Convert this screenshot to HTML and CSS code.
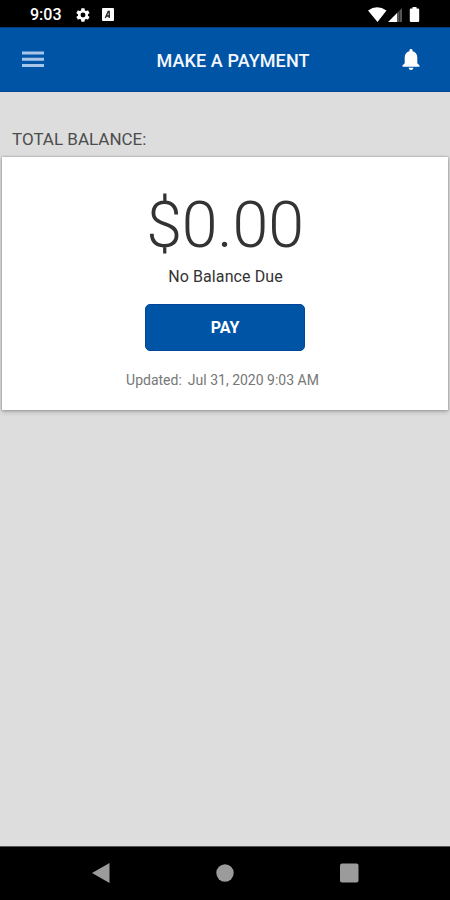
FILE: index.html
```html
<!DOCTYPE html>
<html lang="en">
<head>
<meta charset="utf-8">
<title>Make a Payment</title>
<link rel="stylesheet" href="styles.css">
</head>
<body>
<div class="screen">
  <div class="status">
    <span class="clock">9:03</span>
    <svg class="gear" width="16" height="16" viewBox="0 0 24 24"><path fill="#fff" fill-rule="evenodd" d="M19.4 13a7.500 7.500 0 0 0 0-2l2.100-1.600a.5.5 0 0 0 .1-.7l-2-3.400a.5.5 0 0 0-.6-.2l-2.500 1a7.300 7.300 0 0 0-1.700-1l-.4-2.600a.5.5 0 0 0-.5-.5h-4a.5.5 0 0 0-.5.5L9 5.100a7.300 7.300 0 0 0-1.700 1l-2.500-1a.5.5 0 0 0-.6.2l-2 3.400a.5.5 0 0 0 .1.7L4.500 11a7.500 7.500 0 0 0 0 2l-2.200 1.600a.5.5 0 0 0-.1.700l2 3.400a.5.5 0 0 0 .6.2l2.500-1a7.300 7.300 0 0 0 1.700 1l.4 2.600a.5.5 0 0 0 .5.5h4a.5.5 0 0 0 .5-.5l.4-2.600a7.300 7.300 0 0 0 1.700-1l2.500 1a.5.5 0 0 0 .6-.2l2-3.400a.5.5 0 0 0-.1-.7zM12 15.700a3.700 3.700 0 1 1 0-7.400 3.700 3.700 0 0 1 0 7.400z"/></svg>
    <svg class="keyboard" width="12" height="13" viewBox="0 0 12 13"><rect width="12" height="13" rx="1" fill="#fff"/><path d="M3.300 10 6.200 3.500h1V10M3.800 8H8" fill="none" stroke="#222" stroke-width="1.300"/></svg>
    <svg class="signals" width="54" height="18" viewBox="0 0 54 18"><path fill="#fff" d="M0 4.500Q9-1.800 18.500 4.500L9.500 16zM20 16 29 7v9z"/><path fill="#555" d="M29 7l5-5v14h-5z"/><path d="M31.500 5v11" stroke="#333" stroke-width="1"/><path fill="#fff" d="M44.500 1h4v1.400H50q1.200 0 1.200 1.200v11.200q0 1.200-1.200 1.200h-7q-1.200 0-1.200-1.200V3.600q0-1.200 1.200-1.200h1.500z"/></svg>
  </div>
  <header class="header">
    <svg class="menu" width="22" height="17" viewBox="0 0 22 17"><path d="M0 2h22M0 8.200h22M0 14.500h22" stroke="#a6c5eb" stroke-width="2.900"/></svg>
    <h1 class="title">MAKE A PAYMENT</h1>
    <svg class="bell" width="20" height="22" viewBox="0 0 20 22"><path fill="#fff" d="M10 0c1 0 1.600.7 1.600 1.700v.6c3 .7 4.700 3 4.700 6.200v5.800l2.200 2.300v1.200h-17v-1.200l2.200-2.300V8.500c0-3.200 1.700-5.500 4.700-6.200v-.6C8.400.7 9 0 10 0zM7.700 18.800h4.600C12.300 20.200 11.300 21 10 21s-2.300-.8-2.300-2.200z"/></svg>
  </header>
  <main class="content">
    <h2 class="label">TOTAL BALANCE:</h2>
    <section class="card">
      <div class="amount">$0.00</div>
      <div class="due">No Balance Due</div>
      <button class="pay">PAY</button>
      <div class="updated"><span>Updated:</span><span>Jul 31, 2020 9:03 AM</span></div>
    </section>
  </main>
  <nav class="nav">
    <svg width="18" height="20" viewBox="0 0 18 20"><path fill="#9b9b9b" d="M0 10 17.500 0v20z"/></svg>
    <svg width="18" height="18" viewBox="0 0 18 18"><circle cx="9" cy="9" r="8.700" fill="#9b9b9b"/></svg>
    <svg width="19" height="20" viewBox="0 0 19 20"><rect y=".5" width="18.500" height="19" rx="2" fill="#9b9b9b"/></svg>
  </nav>
</div>
</body>
</html>
```
FILE: styles.css
```css
* { box-sizing: border-box; }
body { margin: 0; font-family: Roboto, "Liberation Sans", sans-serif; }
svg { display: block; flex: none; }
.screen { width: 450px; height: 900px; display: flex; flex-direction: column; background: #ddd; overflow: hidden; }
.status { height: 27px; background: #000; display: flex; align-items: center; padding: 2px 28px 0 30px; color: #fff; }
.clock { width: 45px; font-size: 16px; font-weight: 500; line-height: 20px; white-space: nowrap; }
.keyboard { margin-left: 11px; }
.signals { margin-left: auto; }
.header { height: 65px; background: #0054a6; border-top: 1px solid #003c7d; border-bottom: 1px solid #00458f; display: flex; align-items: center; justify-content: space-between; padding: 0 29px 0 22px; }
.menu { margin-top: -1px; }
.title { margin: 2px 0 0; padding-left: 21px; font-size: 18px; line-height: 22px; font-weight: 500; letter-spacing: 0.1px; color: #f4f7ff; }
.content { flex: 1; padding: 36px 2px 0; }
.label { margin: 0 0 7px 10px; font-size: 17px; line-height: 22px; font-weight: 400; color: #4c4c4c; }
.card { height: 253px; background: #fff; box-shadow: 0 0 2px #888, 0 2px 4px #aaa; display: flex; flex-direction: column; align-items: center; padding-top: 28px; }
.amount { font-size: 64.5px; line-height: 80px; font-weight: 300; letter-spacing: -0.2px; color: #333; }
.due { margin: 1px 0 0 1px; font-size: 16px; line-height: 22px; letter-spacing: 0.1px; color: #333; }
.pay { width: 160px; height: 47px; margin: 16px 0 0; padding: 1px 0 0; border: 1px solid #00479c; border-radius: 5px; background: #0054a6; color: #fff; font: 700 16px/20px Roboto, sans-serif; }
.updated { display: flex; gap: 6px; margin: 19px 5px 0 0; font-size: 14px; line-height: 20px; color: #777; white-space: nowrap; }
.nav { height: 54px; background: #000; border-top: 1px solid #555; display: flex; align-items: center; justify-content: space-between; padding: 0 91px 1px 92px; }
```
